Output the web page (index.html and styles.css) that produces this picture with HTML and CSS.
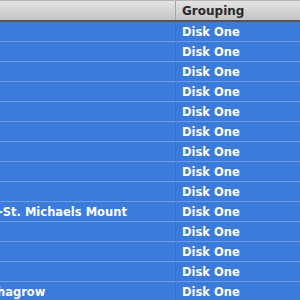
FILE: index.html
```html
<!DOCTYPE html>
<html>
<head>
<meta charset="utf-8">
<link rel="stylesheet" href="styles.css">
</head>
<body>
<div class="table">
  <div class="header">
    <div class="hcell name"></div>
    <div class="hcell grouping">Grouping</div>
  </div>
  <div class="row"><div class="cell name"></div><div class="cell grp">Disk One</div></div>
  <div class="row"><div class="cell name"></div><div class="cell grp">Disk One</div></div>
  <div class="row"><div class="cell name"></div><div class="cell grp">Disk One</div></div>
  <div class="row"><div class="cell name"></div><div class="cell grp">Disk One</div></div>
  <div class="row"><div class="cell name"></div><div class="cell grp">Disk One</div></div>
  <div class="row"><div class="cell name"></div><div class="cell grp">Disk One</div></div>
  <div class="row"><div class="cell name"></div><div class="cell grp">Disk One</div></div>
  <div class="row"><div class="cell name"></div><div class="cell grp">Disk One</div></div>
  <div class="row"><div class="cell name"></div><div class="cell grp">Disk One</div></div>
  <div class="row"><div class="cell name"><span class="clip">-St. Michaels Mount</span></div><div class="cell grp">Disk One</div></div>
  <div class="row"><div class="cell name"></div><div class="cell grp">Disk One</div></div>
  <div class="row"><div class="cell name"></div><div class="cell grp">Disk One</div></div>
  <div class="row"><div class="cell name"></div><div class="cell grp">Disk One</div></div>
  <div class="row"><div class="cell name"><span class="clip short">hagrow</span></div><div class="cell grp">Disk One</div></div>
</div>
</body>
</html>
```
FILE: styles.css
```css
html, body {
  margin: 0;
  padding: 0;
  width: 300px;
  height: 300px;
  overflow: hidden;
  background: #3a7bdc;
}
.table {
  font-family: "DejaVu Sans", "Liberation Sans", sans-serif;
  font-size: 11.5px;
  color: #fff;
}
.header {
  display: grid;
  grid-template-columns: 176px 1fr;
  height: 19px;
  background: linear-gradient(#e4e4e4, #d4d4d4 50%, #c4c4c4);
  border-top: 1px solid #b4b4b4;
  border-bottom: 2px solid #555;
}
.hcell {
  display: flex;
  align-items: center;
  color: #2a2a2a;
  font-weight: bold;
  font-size: 12px;
}
.hcell.name {
  border-right: 1px solid #a4a4a4;
}
.hcell.grouping {
  padding-left: 6px;
}
.row {
  display: grid;
  grid-template-columns: 176px 1fr;
  height: 19px;
  border-bottom: 1px solid #6c9de6;
}
.cell {
  display: flex;
  align-items: center;
  white-space: nowrap;
  overflow: hidden;
  font-weight: bold;
}
.cell.name {
  border-right: 1px solid #336fc9;
}
.clip {
  margin-left: -2px;
}
.clip.short {
  margin-left: -3px;
}
.cell.grp {
  padding-left: 6px;
}
```
